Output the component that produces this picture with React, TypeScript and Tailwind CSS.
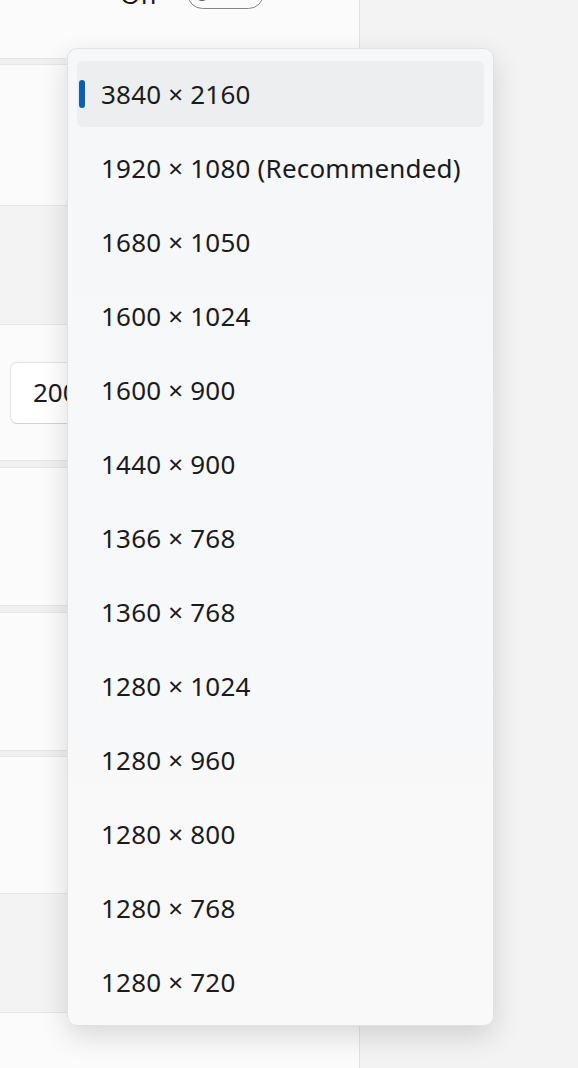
import { ChevronDown } from "lucide-react"

// resolutions offered by the display settings combobox
const resolutions = [
  "3840 × 2160",
  "1920 × 1080 (Recommended)",
  "1680 × 1050",
  "1600 × 1024",
  "1600 × 900",
  "1440 × 900",
  "1366 × 768",
  "1360 × 768",
  "1280 × 1024",
  "1280 × 960",
  "1280 × 800",
  "1280 × 768",
  "1280 × 720",
]

const font = { fontFamily: '"Noto Sans", "Open Sans", sans-serif' }

function Separator({ h }: { h: string }) {
  return <div className={`${h} bg-[#f0f0f0] border-y border-[#e5e5e5]`} />
}

export default function App() {
  return (
    <div
      className="relative w-[578px] h-[1068px] overflow-hidden flex bg-[#f3f3f3] text-[#1b1b1b]"
      style={font}
    >
      {/* === settings cards (behind the flyout) === */}
      <div className="w-[360px] h-full flex flex-col border-r border-[#e3e3e3] bg-[#fbfbfb]">
        <div className="h-[58px] shrink-0">
          <div className="-mt-[22px] h-[31px] flex items-center">
            <span className="ml-[120px] text-[26px] leading-none">Off</span>
            <div className="ml-[29px] w-[77px] h-[31px] rounded-full border-[1.5px] border-[#868686] flex items-center px-[7px]">
              <div className="w-[14px] h-[14px] rounded-full bg-[#5c5c5c]" />
            </div>
            <ChevronDown className="ml-[32px] w-[18px] h-[18px] text-[#5c5c5c]" strokeWidth={1.5} />
          </div>
        </div>
        <Separator h="h-[7px]" />
        <div className="h-[140px] shrink-0" />
        <div className="h-[120px] shrink-0 bg-[#f3f3f3] border-y border-[#e5e5e5]" />
        <div className="h-[135px] shrink-0 flex items-center">
          <div className="ml-[10px] w-[200px] h-[62px] rounded-[7px] border border-[#e2e2e2] border-b-[#d2d2d2] bg-white flex items-center px-[22px]">
            <span className="text-[26px]">200%</span>
          </div>
        </div>
        <Separator h="h-[8px]" />
        <div className="h-[137px] shrink-0" />
        <Separator h="h-[8px]" />
        <div className="h-[137px] shrink-0" />
        <Separator h="h-[7px]" />
        <div className="h-[136px] shrink-0" />
        <div className="h-[120px] shrink-0 bg-[#f3f3f3] border-y border-[#e5e5e5]" />
        <div className="flex-1" />
      </div>

      {/* === resolution flyout === */}
      <div className="absolute left-[67px] top-[48px] w-[427px] rounded-[10px] border border-[#e1e1e1] bg-gradient-to-b from-[#f6f7f9] via-[#f7f8fa] to-[#f9f9f9] shadow-[0_10px_28px_rgba(0,0,0,0.14)] pt-[8px] pb-[6px] px-[9px]">
        {resolutions.map((r, i) => (
          <div key={r} className="h-[74px] py-[4px]">
            <div
              className={`relative h-full rounded-[6px] flex items-center pl-[24px] ${
                i === 0 ? "bg-[#eceef0]" : ""
              }`}
            >
              {i === 0 && (
                <div className="absolute left-[2px] top-[19px] w-[6px] h-[28px] rounded-full bg-[#0a5fb4]" />
              )}
              <span className="text-[26px] leading-none tracking-[0.2px]">{r}</span>
            </div>
          </div>
        ))}
      </div>
    </div>
  )
}
